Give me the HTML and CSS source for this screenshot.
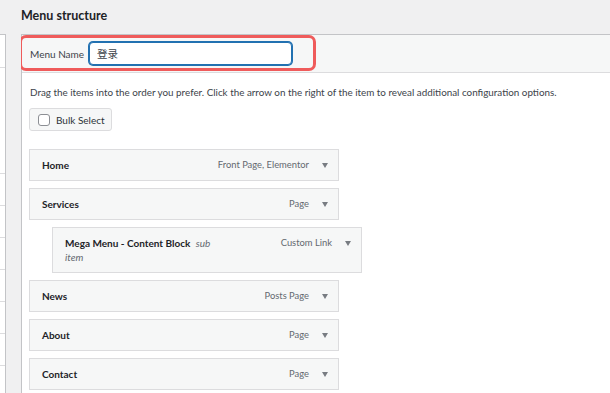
FILE: index.html
```html
<!DOCTYPE html>
<html lang="en">
<head>
    <meta charset="UTF-8">
    <title>Menu structure</title>
    <link rel="stylesheet" href="styles.css">
</head>
<body>
    <div class="page">
        <div class="side">
            <div class="side-row r1"></div>
            <div class="side-row r2"></div>
            <div class="side-row"></div>
            <div class="side-row"></div>
            <div class="side-row"></div>
            <div class="side-row"></div>
            <div class="side-row"></div>
            <div class="side-row"></div>
            <div class="side-row"></div>
        </div>
        <div class="main">
            <h2 class="title">Menu structure</h2>
            <div class="panel">
                <div class="panel-head">
                    <label class="name-label" for="menuName">Menu Name</label>
                    <input class="name-input" type="text" id="menuName" value="登录">
                </div>
                <div class="mark"></div>
                <div class="panel-body">
                    <p class="hint">Drag the items into the order you prefer. Click the arrow on the right of the item to reveal additional configuration options.</p>
                    <button class="bulk"><span class="check"></span>Bulk Select</button>
                    <ul class="menu-list">
                        <li class="item">
                            <span class="item-title">Home</span>
                            <span class="item-controls">Front Page, Elementor <span class="arrow"></span></span>
                        </li>
                        <li class="item">
                            <span class="item-title">Services</span>
                            <span class="item-controls">Page <span class="arrow"></span></span>
                        </li>
                        <li class="item depth-1">
                            <span class="item-title narrow">Mega Menu - Content Block <i class="sub">sub item</i></span>
                            <span class="item-controls">Custom Link <span class="arrow"></span></span>
                        </li>
                        <li class="item">
                            <span class="item-title">News</span>
                            <span class="item-controls">Posts Page <span class="arrow"></span></span>
                        </li>
                        <li class="item">
                            <span class="item-title">About</span>
                            <span class="item-controls">Page <span class="arrow"></span></span>
                        </li>
                        <li class="item">
                            <span class="item-title">Contact</span>
                            <span class="item-controls">Page <span class="arrow"></span></span>
                        </li>
                    </ul>
                </div>
            </div>
        </div>
    </div>
</body>
</html>
```
FILE: styles.css
```css
body {
    margin: 0;
    background: #f0f0f1;
    font-family: Lato, 'Noto Sans CJK SC', sans-serif;
    font-size: 10px;
    color: #3c434a;
    width: 610px;
    height: 393px;
    overflow: hidden;
}
.page {
    display: flex;
    align-items: flex-start;
}
.side {
    width: 5px;
    margin-top: 34px;
    background: #fff;
    border-top: 1px solid #c3c4c7;
    border-right: 1px solid #c3c4c7;
    flex-shrink: 0;
}
.side-row {
    height: 31px;
    border-bottom: 1px solid #dcdcde;
}
.side-row.r1 {
    height: 32px;
}
.side-row.r2 {
    height: 105px;
}
.main {
    margin-left: 15px;
    width: 589px;
    flex-shrink: 0;
    overflow: hidden;
}
.title {
    margin: 0;
    height: 34px;
    line-height: 31px;
    font-size: 12.5px;
    font-weight: 700;
    color: #1d2327;
}
.panel {
    position: relative;
    background: #fff;
    border-top: 1px solid #c3c4c7;
    border-left: 1px solid #c3c4c7;
    height: 358px;
}
.panel-head {
    display: flex;
    align-items: center;
    height: 37px;
    padding-left: 8px;
    background: #f6f7f7;
    border-bottom: 1px solid #dcdcde;
}
.name-label {
    margin-right: 5px;
}
.name-input {
    box-sizing: border-box;
    width: 203px;
    height: 23px;
    margin: 0;
    padding: 0 7px;
    border: 1px solid #2271b1;
    border-radius: 4px;
    box-shadow: 0 0 0 1px #2271b1;
    font-family: inherit;
    font-size: 10.5px;
    color: #3c434a;
    outline: none;
}
.mark {
    position: absolute;
    left: -3px;
    top: 0;
    width: 297px;
    height: 36px;
    box-sizing: border-box;
    border: 3px solid #ef5b5b;
    border-radius: 7px;
}
.panel-body {
    padding: 12px 7px 0;
}
.hint {
    margin: 0 0 0 1px;
    font-size: 9.85px;
    line-height: 15px;
    white-space: nowrap;
}
.bulk {
    display: flex;
    align-items: center;
    box-sizing: border-box;
    height: 23px;
    margin-top: 8px;
    padding: 0 6px 0 8px;
    background: #f6f7f7;
    border: 1px solid #dcdcde;
    border-radius: 3px;
    font-family: inherit;
    font-size: 10px;
    color: #2c3338;
}
.check {
    width: 12px;
    height: 12px;
    box-sizing: border-box;
    border: 1px solid #8c8f94;
    border-radius: 3px;
    background: #fff;
    margin-right: 6px;
}
.menu-list {
    list-style: none;
    margin: 18px 0 0;
    padding: 0;
}
.item {
    display: flex;
    align-items: flex-start;
    justify-content: space-between;
    box-sizing: border-box;
    width: 310px;
    margin-bottom: 7px;
    padding: 8px 10px 8px 12px;
    background: #f6f7f7;
    border: 1px solid #dcdcde;
    line-height: 14px;
}
.item.depth-1 {
    margin-left: 23px;
}
.item-title {
    font-weight: 700;
    color: #1d2327;
}
.item-title.narrow {
    max-width: 148px;
}
.sub {
    font-weight: 400;
    color: #646970;
    margin-left: 3px;
}
.item-controls {
    display: flex;
    align-items: center;
    font-size: 9.4px;
    color: #646970;
}
.arrow {
    width: 0;
    height: 0;
    margin-left: 13px;
    border-left: 3.5px solid transparent;
    border-right: 3.5px solid transparent;
    border-top: 5px solid #787c82;
}
```
